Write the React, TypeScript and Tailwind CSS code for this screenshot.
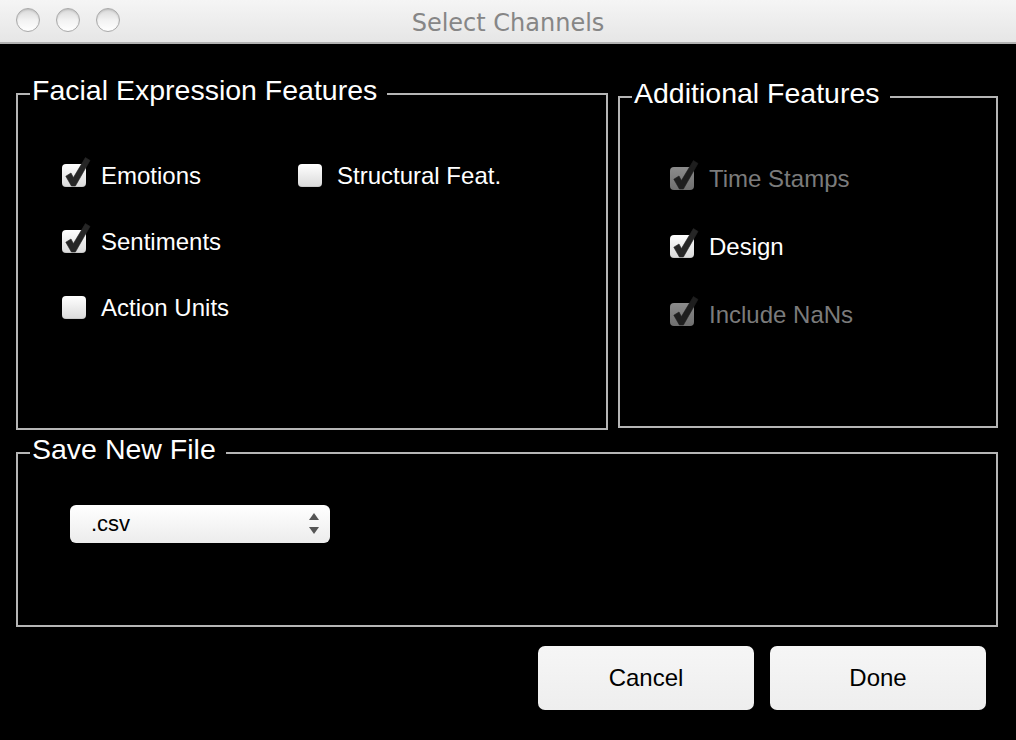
import React from "react";

const SANS = { fontFamily: '"Liberation Sans", Arial, sans-serif' };

function Check({ checked, disabled }: { checked?: boolean; disabled?: boolean }) {
  return (
    <div
      className={
        "relative w-[24px] h-[23px] rounded-[4px] shrink-0 " +
        (disabled
          ? "bg-gradient-to-b from-[#8c8c8c] to-[#6f6f6f]"
          : "bg-gradient-to-b from-[#ffffff] to-[#dadada] shadow-[inset_0_-1px_0_rgba(0,0,0,0.08)]")
      }
    >
      {checked && (
        <svg
          className="absolute left-0 top-0 overflow-visible"
          width="24"
          height="23"
          viewBox="0 0 24 23"
        >
          <path
            d="M3.8 12.2 L9 9 L11.4 13.6 L23.4 -6.4 L28 -3.6 L13.4 22 L9.4 22 Z"
            fill={disabled ? "#1e1e1e" : "#262626"}
            stroke={disabled ? "#1e1e1e" : "#262626"}
            strokeWidth="0.6"
            strokeLinejoin="round"
          />
        </svg>
      )}
    </div>
  );
}

function Item({
  label,
  checked,
  disabled,
}: {
  label: string;
  checked?: boolean;
  disabled?: boolean;
}) {
  return (
    <div className="flex items-center h-[24px]">
      <Check checked={checked} disabled={disabled} />
      <span
        className={
          "ml-[15px] text-[24px] leading-[24px] mt-[2px] whitespace-nowrap " +
          (disabled ? "text-[#7b7b7b]" : "text-white")
        }
      >
        {label}
      </span>
    </div>
  );
}

function Legend({ children }: { children: React.ReactNode }) {
  return (
    <legend className="ml-[12px] pl-[2px] pr-[10px] pb-[8px] text-[28.5px] leading-[28px] text-white whitespace-nowrap">
      {children}
    </legend>
  );
}

function TrafficLight() {
  return (
    <div className="w-[24px] h-[24px] rounded-full border border-[#a9a9a9] bg-gradient-to-b from-[#d9d9d9] via-[#f2f2f2] to-[#ffffff] shadow-[inset_0_1px_2px_rgba(0,0,0,0.15)]" />
  );
}

export default function App() {
  return (
    <div className="w-[1016px] h-[740px] bg-black overflow-hidden flex flex-col" style={SANS}>
      {/* Title bar */}
      <div className="relative h-[44px] shrink-0 bg-gradient-to-b from-[#f5f5f5] to-[#e6e6e6] border-b-2 border-[#b2b2b2] flex items-center">
        <div className="flex gap-[16px] pl-[16px] -mt-[2px]">
          <TrafficLight />
          <TrafficLight />
          <TrafficLight />
        </div>
        <div
          className="absolute left-0 right-0 top-[8px] text-center text-[24px] leading-[30px] text-[#868686]"
          style={{ fontFamily: '"DejaVu Sans", "Lucida Grande", sans-serif' }}
        >
          Select Channels
        </div>
      </div>

      {/* Body */}
      <div className="flex flex-col pl-[16px] pr-[18px] pt-[32px]">
        <div className="flex items-start gap-[10px]">
          <fieldset className="w-[592px] h-[354px] border-2 border-[#b5b5b5]">
            <Legend>Facial Expression Features</Legend>
            <div className="flex pl-[44px] pt-[51px]">
              <div className="flex flex-col gap-[42px] w-[236px]">
                <Item label="Emotions" checked />
                <Item label="Sentiments" checked />
                <Item label="Action Units" />
              </div>
              <div className="flex flex-col">
                <Item label="Structural Feat." />
              </div>
            </div>
          </fieldset>
          <fieldset className="mt-[3px] w-[380px] h-[349px] border-2 border-[#b5b5b5]">
            <Legend>Additional Features</Legend>
            <div className="flex flex-col gap-[44px] pl-[50px] pt-[51px]">
              <Item label="Time Stamps" checked disabled />
              <Item label="Design" checked />
              <Item label="Include NaNs" checked disabled />
            </div>
          </fieldset>
        </div>

        <fieldset className="mt-[5px] w-[982px] h-[192px] border-2 border-[#b5b5b5]">
          <Legend>Save New File</Legend>
          <div className="pl-[52px] pt-[34px]">
            <div className="relative w-[260px] h-[38px] rounded-[6px] bg-gradient-to-b from-[#ffffff] to-[#ececec] shadow-[0_1px_1px_rgba(0,0,0,0.3)] flex items-center pl-[21px]">
              <span className="text-[22px] leading-[22px] text-black">.csv</span>
              <svg
                className="absolute right-[11px] top-[8px]"
                width="10"
                height="22"
                viewBox="0 0 10 22"
              >
                <path d="M5 0 L10 7 L0 7 Z" fill="#555" />
                <path d="M0 14 L10 14 L5 21 Z" fill="#555" />
              </svg>
            </div>
          </div>
        </fieldset>

        <div className="flex justify-end gap-[16px] mt-[19px] pr-[12px]">
          <button className="w-[216px] h-[64px] rounded-[7px] bg-gradient-to-b from-[#f6f6f6] to-[#eeeeee] text-[24px] text-black shadow-[0_1px_1px_rgba(0,0,0,0.3)]">
            Cancel
          </button>
          <button className="w-[216px] h-[64px] rounded-[7px] bg-gradient-to-b from-[#f6f6f6] to-[#eeeeee] text-[24px] text-black shadow-[0_1px_1px_rgba(0,0,0,0.3)]">
            Done
          </button>
        </div>
      </div>
    </div>
  );
}
